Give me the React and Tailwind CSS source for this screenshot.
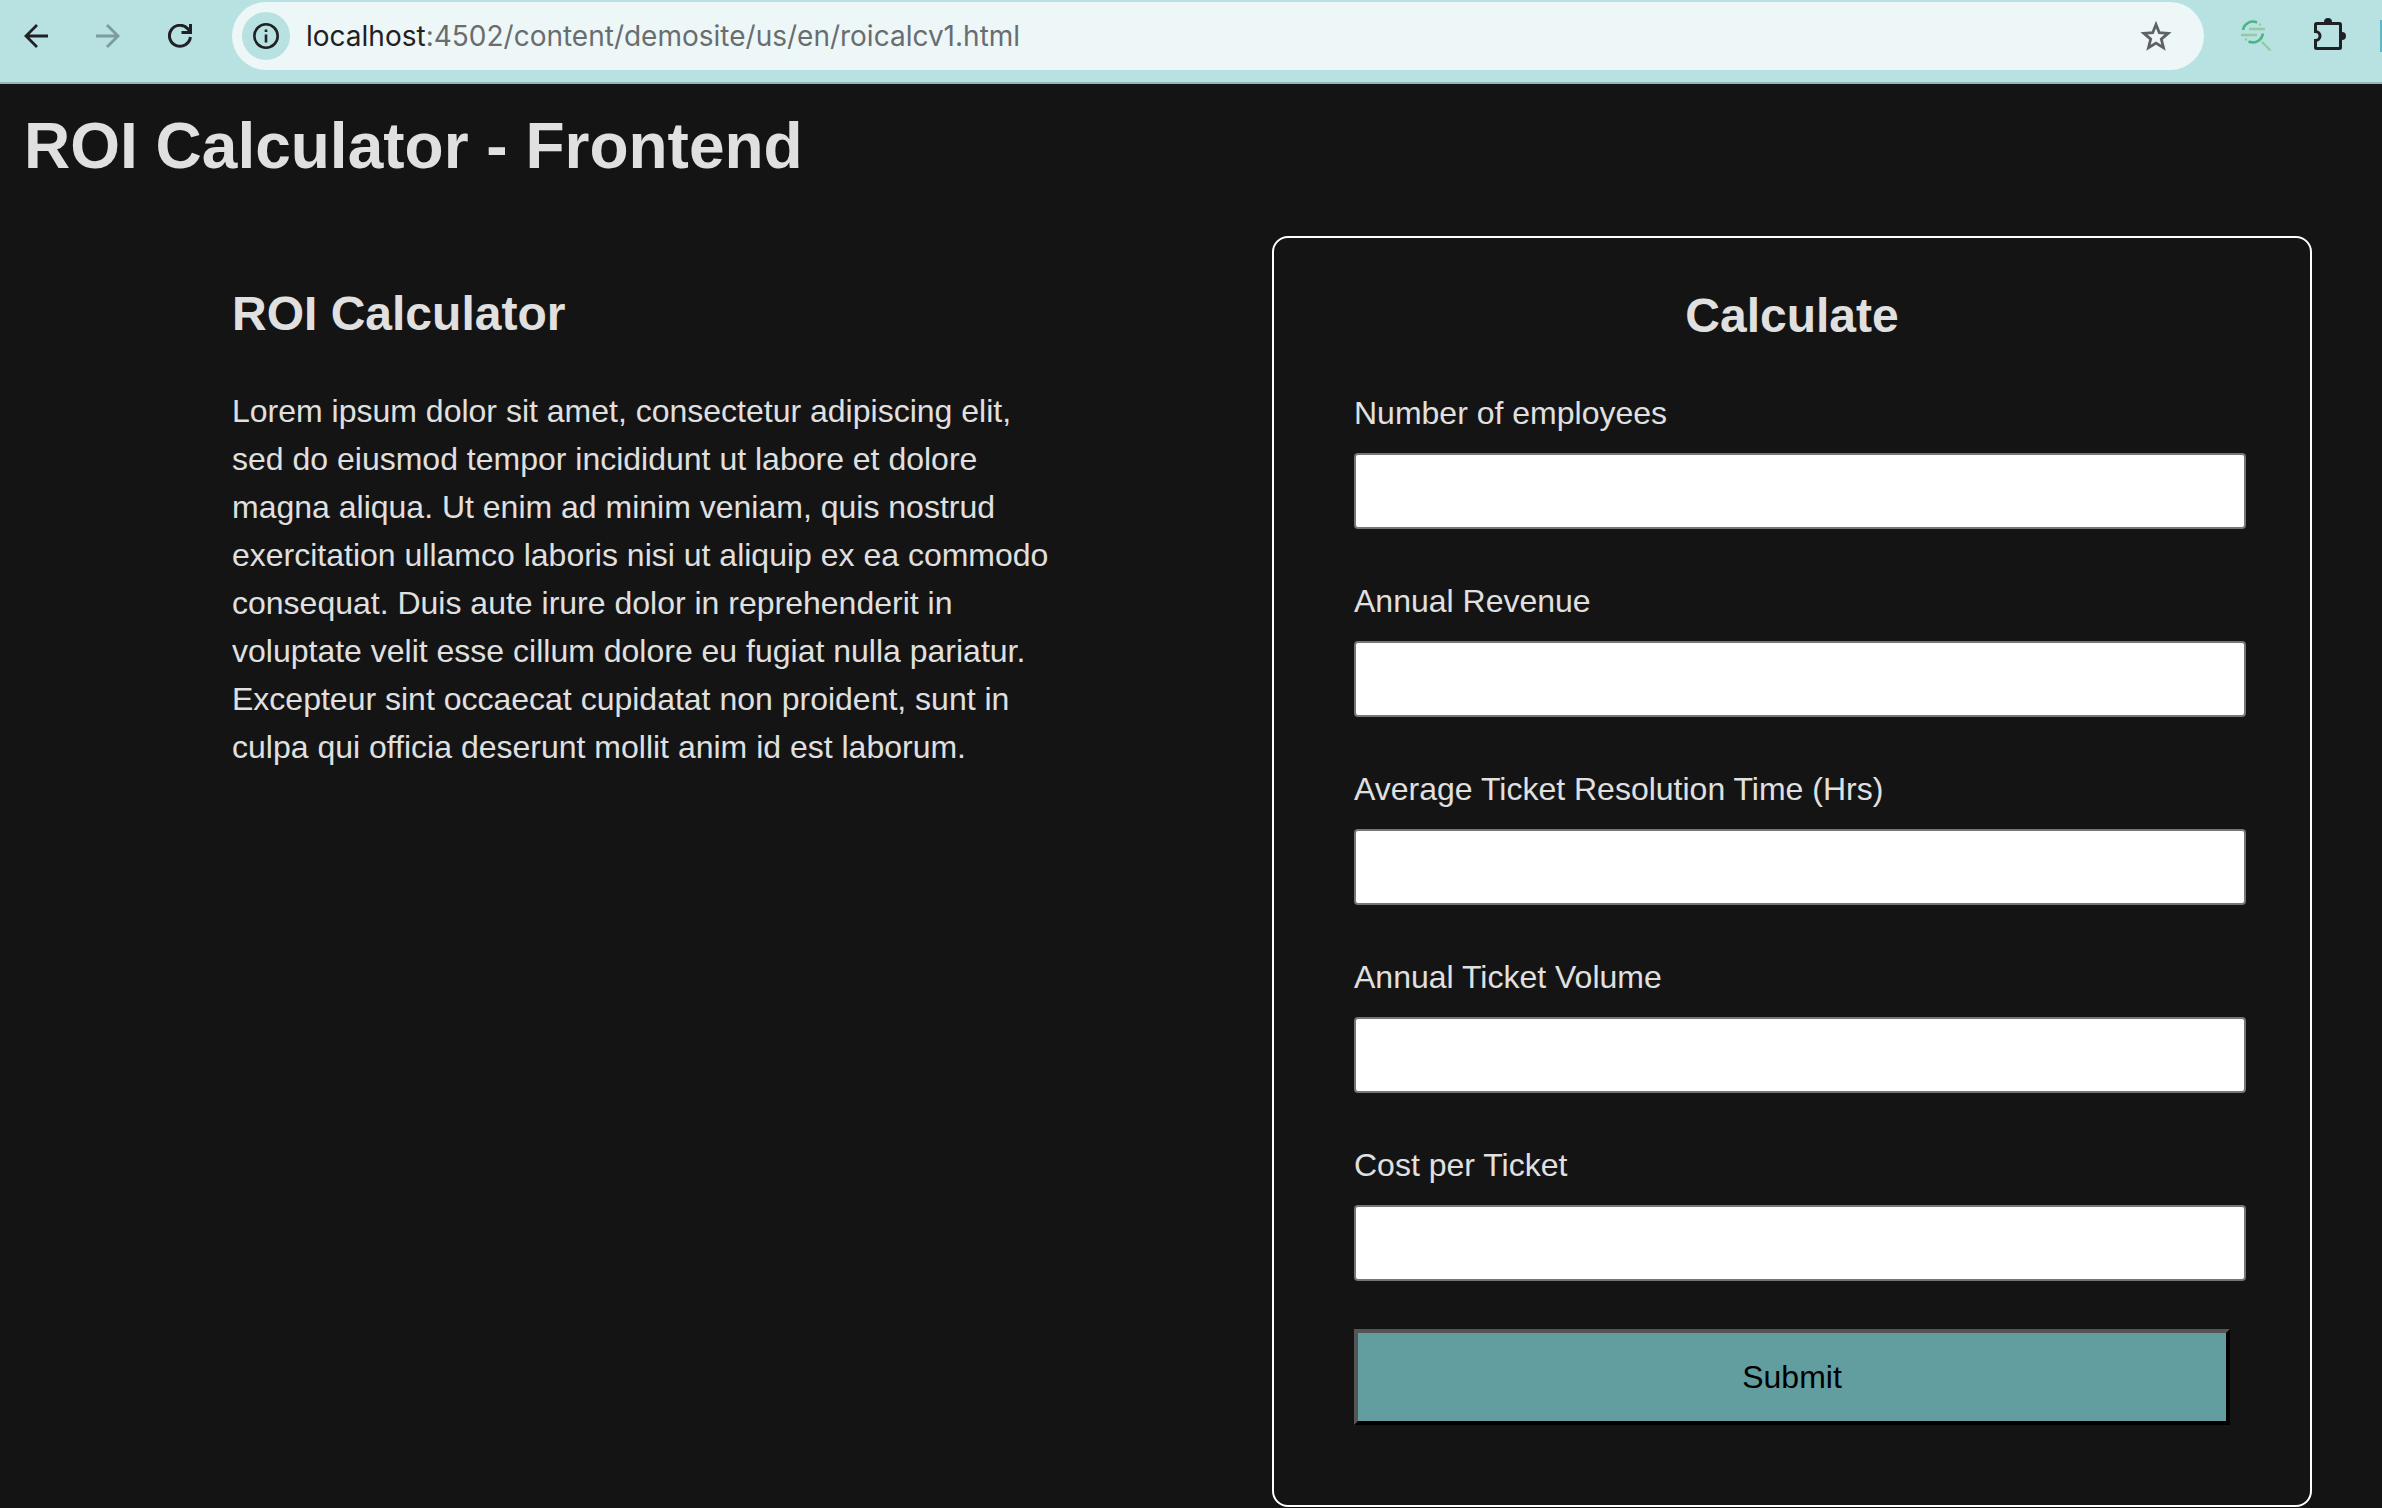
import React from "react";

const fields = [
  { id: "employees", label: "Number of employees" },
  { id: "revenue", label: "Annual Revenue" },
  { id: "resolution", label: "Average Ticket Resolution Time (Hrs)" },
  { id: "volume", label: "Annual Ticket Volume" },
  { id: "cost", label: "Cost per Ticket" },
];

function ArrowIcon({ className }) {
  return (
    <svg className={className} viewBox="0 0 24 24" fill="none" stroke="currentColor" strokeWidth="2.8">
      <path d="M24 12H2M13 1 2 12l11 11" />
    </svg>
  );
}

function ReloadIcon() {
  return (
    <svg className="size-6" viewBox="0 0 24 24" fill="none" stroke="currentColor" strokeWidth="3">
      <path d="M22.4 13a10.5 10.5 0 1 1-2.6-8.2L22 7.5" />
      <path d="M22.5 0v8.5H13.5" />
    </svg>
  );
}

function InfoIcon() {
  return (
    <svg className="size-[26px]" viewBox="0 0 26 26" fill="none" stroke="currentColor" strokeWidth="2.6">
      <circle cx="13" cy="13" r="11.7" />
      <path d="M13 11.5v8M13 6.5v2.6" />
    </svg>
  );
}

function StarIcon() {
  return (
    <svg className="size-8" viewBox="0 0 32 32" fill="none" stroke="currentColor" strokeWidth="2.8">
      <path d="m16 4.5 3.3 8.2 8.8.7-6.8 5.7 2.2 8.6-7.5-4.6-7.5 4.6 2.2-8.6-6.8-5.7 8.8-.7z" />
    </svg>
  );
}

function SearchLinesIcon() {
  return (
    <svg className="size-8" viewBox="0 0 32 32" fill="none">
      <g stroke="#4cb582" strokeWidth="2.6">
        <path d="M3 10A10 10 0 0 1 17 2.500" />
        <path d="M23 13.500A10.500 10.500 0 0 1 8.500 21.500" />
      </g>
      <g stroke="#93cba0" strokeWidth="2.4">
        <path d="M9 9H25M1 15H17M22 22l8.500 8.500" />
      </g>
      <circle cx="20" cy="4.500" r="1.200" fill="#93cba0" />
      <circle cx="6" cy="19.500" r="1.200" fill="#93cba0" />
    </svg>
  );
}

function PuzzleIcon() {
  return (
    <svg className="h-9 w-8" viewBox="0 0 32 36">
      <path
        d="M2.500 5.500h23a1 1 0 0 1 1 1v23a1 1 0 0 1-1 1h-23a1 1 0 0 1-1-1V22.500a4.500 4.500 0 0 0 0-9V6.500a1 1 0 0 1 1-1z"
        fill="none"
        stroke="currentColor"
        strokeWidth="3"
      />
      <path d="M10 4a4 4 0 0 1 8 0zM28 14a4 4 0 0 1 0 8z" fill="currentColor" />
    </svg>
  );
}

function BrowserBar() {
  return (
    <header className="flex h-[84px] items-start border-b-2 border-[#94b5b7] bg-[#b8e1e2] pt-0.5 text-[#1f2125]">
      <nav className="flex h-[68px] items-center gap-12 pl-6" aria-label="Browser">
        <button type="button" aria-label="Back">
          <ArrowIcon className="size-6" />
        </button>
        <button type="button" aria-label="Forward" className="text-[#7d9a9c]">
          <ArrowIcon className="size-6 rotate-180" />
        </button>
        <button type="button" aria-label="Reload">
          <ReloadIcon />
        </button>
      </nav>
      <div className="ml-10 flex h-[68px] flex-1 items-center rounded-full bg-[#edf7f8] pr-8 pl-2.5">
        <button
          type="button"
          aria-label="Site information"
          className="flex size-12 items-center justify-center rounded-full bg-[#b8e1e2]"
        >
          <InfoIcon />
        </button>
        <a href="#top" className="ml-4 flex-1 font-['Inter',sans-serif] text-[28px] leading-9 text-[#696d70]">
          <span className="text-[#1f2125]">localhost</span>:4502/content/demosite/us/en/roicalcv1.html
        </a>
        <button type="button" aria-label="Bookmark" className="text-[#5e6264]">
          <StarIcon />
        </button>
      </div>
      <div className="flex h-[68px] items-center pl-9">
        <button type="button" aria-label="Search extension">
          <SearchLinesIcon />
        </button>
        <button type="button" aria-label="Extensions" className="ml-[42px]">
          <PuzzleIcon />
        </button>
        <span className="ml-[34px] h-8 w-0.5 bg-[#5bb8c4]" />
      </div>
    </header>
  );
}

export default function App() {
  return (
    <div
      id="top"
      className="min-h-screen bg-[#141414] font-['Liberation_Sans',Arial,sans-serif] text-[32px] leading-[48px] text-[#e0e0e0]"
    >
      <BrowserBar />
      <main>
        <h1 className="mt-[26px] mb-[54px] pl-6 text-[64px] leading-[72px] font-bold">ROI Calculator - Frontend</h1>
        <div className="grid grid-cols-2 items-start pr-[70px] pl-[232px]">
          <section className="pt-[50px] pr-[208px]">
            <h2 className="mb-[45px] text-[48px] leading-[56px] font-bold">ROI Calculator</h2>
            <p>
              Lorem ipsum dolor sit amet, consectetur adipiscing elit, sed do eiusmod tempor incididunt ut labore et
              dolore magna aliqua. Ut enim ad minim veniam, quis nostrud exercitation ullamco laboris nisi ut aliquip ex
              ea commodo consequat. Duis aute irure dolor in reprehenderit in voluptate velit esse cillum dolore eu
              fugiat nulla pariatur. Excepteur sint occaecat cupidatat non proident, sunt in culpa qui officia deserunt
              mollit anim id est laborum.
            </p>
          </section>
          <form
            className="rounded-2xl border-2 border-white px-20 pt-[50px] pb-20"
            onSubmit={(event) => event.preventDefault()}
          >
            <h2 className="mb-[45px] text-center text-[48px] leading-[56px] font-bold">Calculate</h2>
            <div className="flex flex-col gap-12">
              {fields.map((field) => (
                <div key={field.id} className="-mr-4 flex flex-col gap-4">
                  <label htmlFor={field.id}>{field.label}</label>
                  <input
                    id={field.id}
                    name={field.id}
                    type="text"
                    className="h-[76px] rounded-sm border-2 border-[#767676] bg-white px-4 text-black"
                  />
                </div>
              ))}
              <button
                type="submit"
                className="h-24 border-4 border-t-[#555555] border-r-black border-b-black border-l-[#555555] bg-[#629e9f] text-black"
              >
                Submit
              </button>
            </div>
          </form>
        </div>
      </main>
    </div>
  );
}
